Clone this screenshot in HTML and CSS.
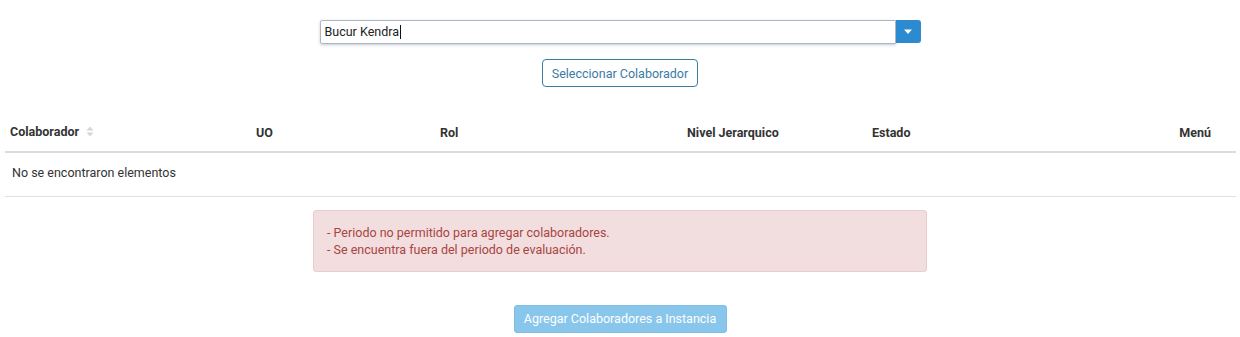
FILE: index.html
```html
<!DOCTYPE html>
<html lang="es">
<head>
<meta charset="utf-8">
<title>Agregar Colaboradores</title>
<link rel="stylesheet" href="styles.css">
</head>
<body>
<div class="page">
  <div class="search-row">
    <div class="combo">
      <div class="combo-input">Bucur Kendra<span class="caret-cursor"></span></div>
      <button class="combo-btn" type="button" aria-label="Abrir lista">
        <svg width="10" height="6" viewBox="0 0 10 6"><path d="M1 0.5 L9 0.5 L5 5 Z" fill="#fff"/></svg>
      </button>
    </div>
  </div>
  <div class="select-row">
    <button class="btn-outline" type="button">Seleccionar Colaborador</button>
  </div>

  <table class="grid">
    <colgroup>
      <col class="c1"><col class="c2"><col class="c3"><col class="c4"><col class="c5"><col class="c6">
    </colgroup>
    <thead>
      <tr>
        <th>Colaborador <span class="sort"><svg width="8" height="11" viewBox="0 0 8 11"><path d="M4 0.5 L7.5 4.5 L0.5 4.5 Z M4 10.5 L7.5 6.5 L0.5 6.5 Z" fill="#d6d6d6"/></svg></span></th>
        <th>UO</th>
        <th>Rol</th>
        <th>Nivel Jerarquico</th>
        <th>Estado</th>
        <th class="menu">Menú</th>
      </tr>
    </thead>
    <tbody>
      <tr><td colspan="6">No se encontraron elementos</td></tr>
    </tbody>
  </table>

  <div class="alert-row">
    <div class="alert">
      <div>- Periodo no permitido para agregar colaboradores.</div>
      <div>- Se encuentra fuera del periodo de evaluación.</div>
    </div>
  </div>

  <div class="add-row">
    <button class="btn-primary" type="button" disabled>Agregar Colaboradores a Instancia</button>
  </div>
</div>
</body>
</html>
```

FILE: styles.css
```css
* { box-sizing: border-box; }
html, body { margin: 0; padding: 0; background: #fff; }
body {
  font-family: Roboto, "Liberation Sans", Arial, sans-serif;
  font-size: 12.5px;
  color: #333;
}
.page { padding-top: 20px; }

.search-row { display: flex; justify-content: center; }
.combo { display: flex; width: 601px; }
.combo-input {
  width: 576px;
  height: 24px;
  border: 1px solid #aab7c6;
  border-radius: 2px 0 0 2px;
  box-shadow: 0 1px 3px rgba(60, 80, 110, 0.3);
  padding: 0 4px;
  line-height: 22px;
  color: #222;
  display: flex;
  align-items: center;
}
.caret-cursor {
  display: inline-block;
  width: 1px;
  height: 14px;
  background: #111;
  margin-left: 1px;
}
.combo-btn {
  width: 25px;
  height: 23px;
  border: 0;
  padding: 0;
  background: #2b8ad0;
  border-radius: 0 3px 3px 0;
  display: flex;
  align-items: center;
  justify-content: center;
}

.select-row { display: flex; justify-content: center; margin-top: 15px; }
.btn-outline {
  font: inherit;
  height: 28px;
  width: 156px;
  padding: 0;
  background: #fff;
  border: 1px solid #3a7da3;
  border-radius: 4px;
  color: #3a7ca6;
}

.grid {
  margin: 28px 4px 0 5px;
  width: 1231px;
  border-collapse: collapse;
  table-layout: fixed;
}
.c1 { width: 246px; }
.c2 { width: 184px; }
.c3 { width: 247px; }
.c4 { width: 185px; }
.c5 { width: 200px; }
.grid th {
  text-align: left;
  font-weight: bold;
  height: 37px;
  padding: 0 5px 2px;
  border-bottom: 2px solid #dcdcdc;
  color: #333;
}
.grid th.menu { text-align: right; padding-right: 25px; }
.sort { display: inline-block; vertical-align: -1px; margin-left: 4px; }
.grid td {
  height: 44px;
  padding: 0 7px 3px;
  border-bottom: 1px solid #e0e0e0;
  color: #333;
}

.alert-row { display: flex; justify-content: center; margin-top: 13px; }
.alert {
  width: 614px;
  background: #f2dede;
  border: 1px solid #ebccd1;
  border-radius: 3px;
  color: #a94442;
  padding: 13px 13px;
  line-height: 17px;
}

.add-row { display: flex; justify-content: center; margin-top: 33px; }
.btn-primary {
  font: inherit;
  height: 28px;
  width: 213px;
  padding: 0;
  border: 1px solid #7fbde6;
  background: #88c6ec;
  color: #fff;
  border-radius: 3px;
}
```
